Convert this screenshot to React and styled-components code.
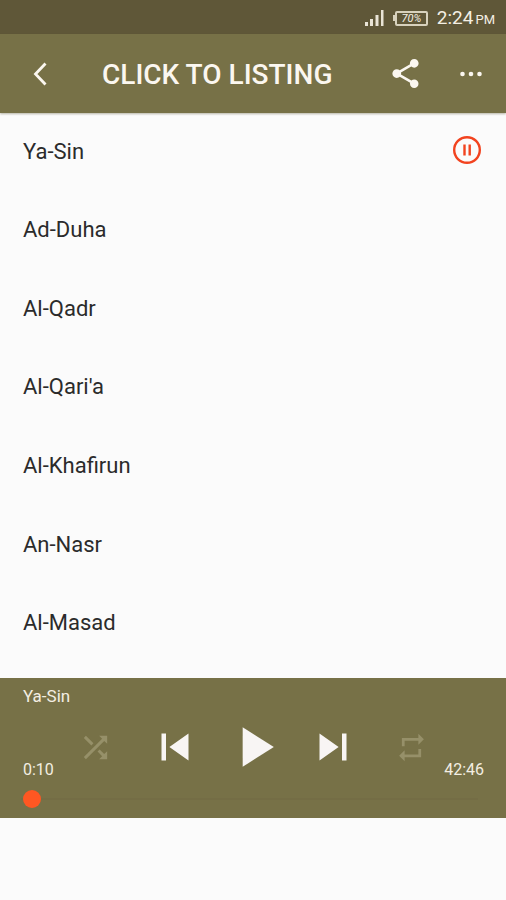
import React, { useState } from 'react';
import styled, { createGlobalStyle } from 'styled-components';

const GlobalStyle = createGlobalStyle`
  * {
    box-sizing: border-box;
  }

  body {
    margin: 0;
    background: #fbfbfb;
    font-family: Roboto, 'Liberation Sans', sans-serif;
  }
`;

const Screen = styled.div`
  display: flex;
  flex-direction: column;
  min-height: 100vh;
  padding-bottom: 82px;
`;

const StatusBar = styled.div`
  display: flex;
  align-items: center;
  justify-content: flex-end;
  height: 34px;
  padding: 2px 11px 0 0;
  background: #5f5738;
  color: #f4efe4;
`;

const Battery = styled.span`
  display: flex;
  align-items: center;
  margin: 0 9px;

  &::before {
    content: '';
    width: 2px;
    height: 6px;
    background: #d8d2bd;
  }
`;

const BatteryLevel = styled.span`
  width: 33px;
  height: 15px;
  border: 2px solid #d8d2bd;
  border-radius: 2px;
  font-size: 11px;
  font-style: italic;
  line-height: 11px;
  text-align: center;
`;

const Clock = styled.span`
  padding-top: 2px;
  font-size: 19px;
  line-height: 24px;
`;

const Meridiem = styled.small`
  margin-left: 2px;
  font-size: 13px;
`;

const AppBar = styled.header`
  display: flex;
  align-items: center;
  height: 79px;
  padding: 0 11px 0 16px;
  background: #777147;
  box-shadow: 0 1px 2px rgba(80, 74, 40, 0.4);
  color: #fbf7f0;
`;

const Title = styled.h1`
  flex: 1;
  margin: 0 0 0 38px;
  padding-top: 2px;
  font-size: 28px;
  font-weight: 500;
  line-height: 32px;
  white-space: nowrap;
`;

const IconButton = styled.button`
  display: flex;
  align-items: center;
  justify-content: center;
  flex: none;
  width: 48px;
  height: 48px;
  margin: 0 0 0 ${({ $gap }) => $gap || 0}px;
  padding: 0;
  border: 0;
  background: none;
  color: inherit;
  cursor: pointer;

  svg {
    flex: none;
  }
`;

const TrackList = styled.ul`
  display: flex;
  flex: 1;
  flex-direction: column;
  justify-content: space-between;
  margin: 0;
  padding: 12px 0 29px;
  list-style: none;
`;

const TrackButton = styled.button`
  display: flex;
  align-items: center;
  justify-content: space-between;
  width: 100%;
  height: 52px;
  padding: 0 24px 0 23px;
  border: 0;
  background: none;
  color: #2b2b2b;
  font-family: inherit;
  font-size: 22px;
  text-align: left;
  cursor: pointer;
`;

const Player = styled.footer`
  display: flex;
  flex-direction: column;
  padding: 8px 22px 9px 23px;
  background: #777147;
  color: #f3eee2;
  font-size: 17px;
  line-height: 20px;
`;

const ControlRow = styled.div`
  display: grid;
  grid-template-columns: 1fr auto 1fr;
  height: 68px;
  margin: 7px 0 8px;
`;

const Time = styled.span`
  align-self: end;
  justify-self: ${({ $end }) => ($end ? 'end' : 'start')};
  padding-bottom: 1px;
  font-size: 16px;
`;

const Controls = styled.div`
  display: flex;
  align-items: center;
  gap: 25px;
`;

const ControlButton = styled(IconButton)`
  width: 54px;
  height: 68px;
  color: ${({ $on }) => ($on ? '#f8f5f4' : '#969069')};
`;

const Seek = styled.input`
  width: calc(100% - 4px);
  height: 20px;
  margin: 0 0 0 -2px;
  appearance: none;
  background: none;

  &::-webkit-slider-runnable-track {
    height: 2px;
    background: #746d45;
  }

  &::-webkit-slider-thumb {
    width: 18px;
    height: 18px;
    margin-top: -8px;
    border-radius: 50%;
    appearance: none;
    background: #ff5722;
  }
`;

const Icon = ({ size, d }) => (
  <svg width={size} height={size} viewBox="0 0 24 24" fill="currentColor">
    <path d={d} />
  </svg>
);

const SHARE =
  'M18 16.08c-.76 0-1.44.3-1.96.77L8.91 12.7c.05-.23.09-.46.09-.7s-.04-.47-.09-.7l7.05-4.11c.54.5 1.25.81 2.04.81 1.66 0 3-1.34 3-3s-1.34-3-3-3-3 1.34-3 3c0 .24.04.47.09.7L8.04 9.81C7.5 9.31 6.79 9 6 9c-1.66 0-3 1.34-3 3s1.34 3 3 3c.79 0 1.5-.31 2.04-.81l7.12 4.16c-.05.21-.08.43-.08.65 0 1.61 1.31 2.92 2.92 2.92s2.92-1.31 2.92-2.92-1.31-2.92-2.92-2.92z';
const SHUFFLE =
  'M10.59 9.17L5.41 4 4 5.41l5.17 5.17 1.42-1.41zM14.5 4l2.04 2.04L4 18.59 5.41 20 17.96 7.46 20 9.5V4h-5.5zm.33 9.41l-1.41 1.41 3.13 3.13L14.5 20H20v-5.5l-2.04 2.04-3.13-3.13z';
const REPEAT =
  'M7 7h10v3l4-4-4-4v3H5v6h2V7zm10 10H7v-3l-4 4 4 4v-3h12v-6h-2v4z';

const tracks = [
  'Ya-Sin',
  'Ad-Duha',
  'Al-Qadr',
  "Al-Qari'a",
  'Al-Khafirun',
  'An-Nasr',
  'Al-Masad',
];

const formatTime = (seconds) =>
  `${Math.floor(seconds / 60)}:${String(seconds % 60).padStart(2, '0')}`;

const App = () => {
  const [current, setCurrent] = useState(0);
  const [position, setPosition] = useState(10);
  const [shuffle, setShuffle] = useState(false);
  const [repeat, setRepeat] = useState(false);

  const selectTrack = (index) => {
    setCurrent((index + tracks.length) % tracks.length);
    setPosition(0);
  };

  return (
    <Screen>
      <GlobalStyle />
      <StatusBar>
        <svg width="19" height="16" viewBox="0 0 19 16" fill="#e9e4d6">
          <path d="M0 12h3v4H0zM5 9h3v7H5zM10.500 5h3v11h-3zM16 0h2.500v16H16z" />
        </svg>
        <Battery>
          <BatteryLevel>70%</BatteryLevel>
        </Battery>
        <Clock>
          2:24<Meridiem>PM</Meridiem>
        </Clock>
      </StatusBar>
      <AppBar>
        <IconButton aria-label="Back">
          <svg width="16" height="24" viewBox="0 0 16 24" fill="none">
            <path
              d="M13.500 1.500L3.500 12l10 10.500"
              stroke="currentColor"
              strokeWidth="2.800"
            />
          </svg>
        </IconButton>
        <Title>CLICK TO LISTING</Title>
        <IconButton aria-label="Share">
          <Icon size={35} d={SHARE} />
        </IconButton>
        <IconButton aria-label="More" $gap={18}>
          <svg width="24" height="6" viewBox="0 0 24 6" fill="currentColor">
            <circle cx="3.500" cy="3" r="2.300" />
            <circle cx="12" cy="3" r="2.300" />
            <circle cx="20.500" cy="3" r="2.300" />
          </svg>
        </IconButton>
      </AppBar>
      <TrackList>
        {tracks.map((track, index) => (
          <li key={track}>
            <TrackButton onClick={() => selectTrack(index)}>
              {track}
              {index === current && (
                <svg width="30" height="30" viewBox="0 0 30 30" fill="none">
                  <circle
                    cx="15"
                    cy="14"
                    r="12.800"
                    stroke="#f2431f"
                    strokeWidth="2.400"
                  />
                  <path
                    d="M12.500 8.500v11M17.700 8.500v11"
                    stroke="#f2431f"
                    strokeWidth="2.400"
                  />
                </svg>
              )}
            </TrackButton>
          </li>
        ))}
      </TrackList>
      <Player>
        <span>{tracks[current]}</span>
        <ControlRow>
          <Time>{formatTime(position)}</Time>
          <Controls>
            <ControlButton
              aria-label="Shuffle"
              $on={shuffle}
              onClick={() => setShuffle(!shuffle)}
            >
              <Icon size={35} d={SHUFFLE} />
            </ControlButton>
            <ControlButton
              aria-label="Previous"
              $on
              onClick={() => selectTrack(current - 1)}
            >
              <Icon size={54} d="M6 6h2v12H6zm3.500 6l8.500 6V6z" />
            </ControlButton>
            <ControlButton aria-label="Play" $on>
              <Icon size={68} d="M8 5v14l11-7z" />
            </ControlButton>
            <ControlButton
              aria-label="Next"
              $on
              onClick={() => selectTrack(current + 1)}
            >
              <Icon size={54} d="M6 18l8.500-6L6 6v12zM16 6v12h2V6h-2z" />
            </ControlButton>
            <ControlButton
              aria-label="Repeat"
              $on={repeat}
              onClick={() => setRepeat(!repeat)}
            >
              <Icon size={33} d={REPEAT} />
            </ControlButton>
          </Controls>
          <Time $end>42:46</Time>
        </ControlRow>
        <Seek
          type="range"
          aria-label="Position"
          min="0"
          max="2566"
          value={position}
          onChange={({ target }) => setPosition(Number(target.value))}
        />
      </Player>
    </Screen>
  );
};

export default App;
